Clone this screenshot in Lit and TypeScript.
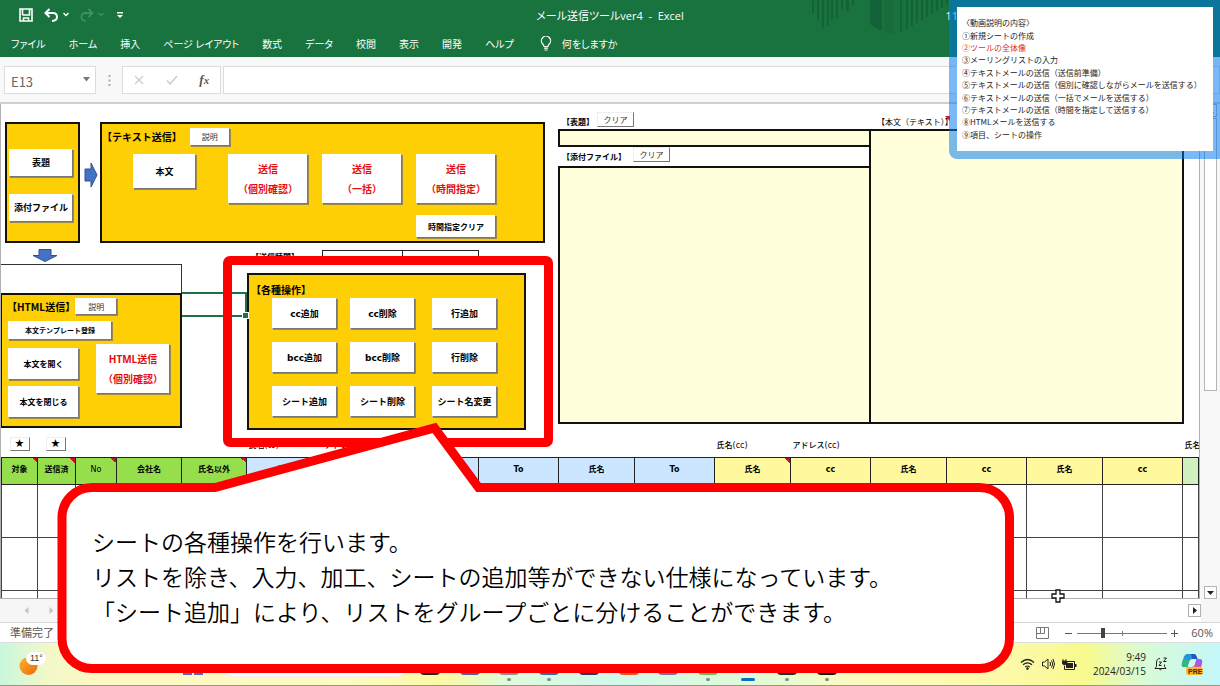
import { LitElement, html, css, svg } from "lit";
import { customElement } from "lit/decorators.js";
import { classMap } from "lit/directives/class-map.js";

interface Column {
  label: string;
  tone: string;
  note?: boolean;
  plain?: boolean;
}

const MENU = ["ファイル", "ホーム", "挿入", "ページ レイアウト", "数式", "データ", "校閲", "表示", "開発", "ヘルプ"];

const COLUMNS: Column[] = [
  { label: "対象", tone: "green", note: true },
  { label: "送信済", tone: "green", note: true },
  { label: "No", tone: "green", note: true, plain: true },
  { label: "会社名", tone: "green" },
  { label: "氏名以外", tone: "green", note: true },
  { label: "氏名", tone: "blue" },
  { label: "To", tone: "blue" },
  { label: "氏名", tone: "blue" },
  { label: "To", tone: "blue" },
  { label: "氏名", tone: "blue" },
  { label: "To", tone: "blue" },
  { label: "氏名", tone: "yellow", note: true },
  { label: "cc", tone: "yellow" },
  { label: "氏名", tone: "yellow" },
  { label: "cc", tone: "yellow" },
  { label: "氏名", tone: "yellow" },
  { label: "cc", tone: "yellow" },
  { label: "", tone: "mint" },
];

const OPERATIONS = ["cc追加", "cc削除", "行追加", "bcc追加", "bcc削除", "行削除", "シート追加", "シート削除", "シート名変更"];

const CONTENTS = [
  "〈動画説明の内容〉",
  "①新規シートの作成",
  "②ツールの全体像",
  "③メーリングリストの入力",
  "④テキストメールの送信（送信前準備）",
  "⑤テキストメールの送信（個別に確認しながらメールを送信する）",
  "⑥テキストメールの送信（一括でメールを送信する）",
  "⑦テキストメールの送信（時間を指定して送信する）",
  "⑧HTMLメールを送信する",
  "⑨項目、シートの操作",
];

const TASKS = [
  { color: "#222222", dot: "" },
  { color: "#5a5f9a", dot: "" },
  { color: "#8a8f98", dot: "on" },
  { color: "#2f6fb0", dot: "on" },
  { color: "#2a3a5c", dot: "" },
  { color: "#f4511e", dot: "" },
  { color: "#7b6fa8", dot: "" },
  { color: "#6cc04a", dot: "on" },
  { color: "#ffffff", dot: "active" },
  { color: "#1d2b3f", dot: "on" },
  { color: "#111111", dot: "on" },
];

@customElement("excel-header")
export class ExcelHeader extends LitElement {
  static styles = css`
    :host { display: block; background: #18733f; color: #fff; position: relative; overflow: hidden; }
    .art { position: absolute; right: 270px; top: 0; }
    .title { display: grid; grid-template-columns: 1fr auto 1fr; align-items: center; height: 30px; font-size: 11px; position: relative; }
    .quick { display: flex; align-items: center; padding-left: 19px; gap: 11px; }
    .quick button { background: none; border: 0; padding: 0; display: flex; color: #fff; }
    .user { justify-self: end; margin-right: 262px; }
    .name { white-space: pre; }
    nav { display: flex; align-items: center; gap: 23px; height: 27px; padding-left: 11px; font-size: 10px; position: relative; }
    nav a { color: #fff; text-decoration: none; white-space: nowrap; line-height: 16px; }
    .ask { display: flex; align-items: center; gap: 10px; margin-left: 3px; }
  `;
  render() {
    const bars = [812, 817, 822, 827, 831, 836, 841];
    const ends = [14, 20, 28, 26, 20, 18, 10];
    const right = [900, 906, 911, 916, 921, 926, 931, 936, 941, 946];
    return html`
      <svg class="art" width="140" height="57" viewBox="810 0 140 57" aria-hidden="true">
        ${bars.map((x, i) => svg`<rect x=${x} y="0" width="2" height=${ends[i]} fill="#13623a" />`)}
        <path d="M846 0h3v11h-3zM852 0h2v6h-2zM870 0h12v31q-7-3-12-7z" fill="#13623a" />
        <path d="M884 0h10v33h-10z" fill="#176b3d" />
        ${right.map((x, i) => svg`<rect x=${x} y="0" width="2" height=${32 - i * 3} fill="#13623a" />`)}
      </svg>
      <div class="title">
        <div class="quick">
          <button aria-label="保存">
            <svg width="14" height="14" viewBox="0 0 14 14" fill="none" stroke="#fff" stroke-width="1.6">
              <path d="M1 1h12v12H1zM3.500 7h7V1M3.500 1v6M4.500 13v-3h5v3" />
            </svg>
          </button>
          <button aria-label="元に戻す">
            <svg width="25" height="14" viewBox="0 0 25 14" fill="none" stroke="#fff" stroke-width="2">
              <path d="M5.500 1L1.500 5l4 4M2 5h7.500q3.500 .5 3.500 4t-5 4" /><path d="M19.500 5l2.500 2.500 2.500-2.500" stroke-width="1.400" />
            </svg>
          </button>
          <button aria-label="やり直し" disabled>
            <svg width="25" height="14" viewBox="0 0 25 14" fill="none" stroke="#3f9163" stroke-width="1.800">
              <path d="M8.500 1l4 4-4 4M12 5H5Q1.500 5.500 1.500 9t4 4" /><path d="M18.500 5l2.500 2.500 2.500-2.500" stroke-width="1.300" />
            </svg>
          </button>
          <button aria-label="クイック アクセスのカスタマイズ">
            <svg width="8" height="8" viewBox="0 0 8 8"><path d="M1 1h6v1.400H1zM1 4h6L4 7z" fill="#fff" /></svg>
          </button>
        </div>
        <span class="name">メール送信ツールver4  -  Excel</span>
        <span class="user">11</span>
      </div>
      <nav>
        ${MENU.map((m) => html`<a href="#">${m}</a>`)}
        <a href="#" class="ask">
          <svg width="12" height="15" viewBox="0 0 12 15" fill="none" stroke="#fff" stroke-width="1.200">
            <path d="M4 10.500Q4 9 2.500 7.800A4.600 4.600 0 1 1 9.500 7.800Q8 9 8 10.500zM4 12.200h4M4.500 14h3" />
          </svg>何をしますか</a>
      </nav>
    `;
  }
}

@customElement("formula-bar")
export class FormulaBar extends LitElement {
  static styles = css`
    :host { display: flex; align-items: center; padding: 9px 0 8px 4px; background: #f8f8f8; border-bottom: 2px solid #cfcfcf; }
    .box { box-sizing: border-box; height: 28px; border: 1px solid #dcdcdc; background: #fff; display: flex; align-items: center; }
    .ref { position: relative; width: 92px; }
    select { appearance: none; border: 0; background: none; width: 100%; height: 26px; padding: 3px 6px 0; font: 13px "Noto Sans CJK JP", sans-serif; color: #666; }
    .ref svg { position: absolute; right: 5px; top: 10px; pointer-events: none; }
    .dots { width: 26px; display: flex; justify-content: center; }
    .tools { width: 99px; justify-content: space-around; }
    .tools button { border: 0; background: none; padding: 0; display: flex; }
    .tools .fx { font: italic bold 13px/16px "Liberation Serif", serif; color: #555; }
    input { flex: 1; min-width: 0; margin-left: 2px; outline: none; padding: 0 6px; }
  `;
  render() {
    return html`
      <div class="box ref">
        <select aria-label="名前ボックス"><option>E13</option></select>
        <svg width="7" height="5" viewBox="0 0 7 5"><path d="M0 0h7L3.500 4.500z" fill="#777" /></svg>
      </div>
      <div class="dots"><svg width="3" height="11" viewBox="0 0 3 11" fill="#aaa"><path d="M.5 0h2v2h-2zM.5 4.500h2v2h-2zM.5 9h2v2h-2z" /></svg></div>
      <div class="box tools">
        <button aria-label="キャンセル"><svg width="10" height="10" viewBox="0 0 10 10" stroke="#ccc" stroke-width="1.200"><path d="M1 1l8 8M9 1L1 9" /></svg></button>
        <button aria-label="入力"><svg width="12" height="10" viewBox="0 0 12 10" fill="none" stroke="#ccc" stroke-width="1.500"><path d="M1 5.500L4 9l7-8" /></svg></button>
        <button class="fx" aria-label="関数の挿入">f<small>x</small></button>
      </div>
      <input class="box" aria-label="数式バー" />
    `;
  }
}

@customElement("work-sheet")
export class WorkSheet extends LitElement {
  static styles = css`
    :host { display: flex; flex: 1; min-height: 0; background: #f8f8f8; color: #000; }
    * { box-sizing: border-box; }
    .cells { flex: 1; min-width: 0; overflow: hidden; background: #fff; border: 1px solid #b0b0b0; border-width: 0 1px 1px; }
    .canvas { display: flex; }
    .left { flex: none; width: 557px; padding-top: 18px; }
    .row { display: flex; }
    .panel { background: #ffcf05; border: 2px solid #151208; flex: none; }
    .panel h2 { margin: 0; font-family: "Noto Sans CJK JP", sans-serif; font-size: 10px; line-height: 16px; font-weight: 700; white-space: nowrap; }
    .btn { font-family: inherit; font-feature-settings: inherit; background: #fff; border: 1px solid #fff; border-right-color: #777; border-bottom-color: #777; box-shadow: 1px 1px 0 #9a8a50; padding: 0; color: #000; font-size: 9px; font-weight: 700; line-height: 20px; white-space: nowrap; }
    .small { font-size: 8px; line-height: 12px; }
    .tiny { font-size: 7px; line-height: 12px; }
    .light { font-weight: 400; color: #333; font-size: 8px; line-height: 12px; }
    .red { color: #e60d10; font-size: 10px; }
    .flat { box-shadow: none; border-top-color: #eee; border-left-color: #eee; font-size: 8px; line-height: 10px; font-weight: 400; color: #333; }
    .subject { width: 75px; height: 121px; margin-left: 4px; padding: 25px 5px 0 2px; display: flex; flex-direction: column; gap: 17px; }
    .subject .btn { height: 28px; }
    .next { flex: none; margin: 40px 2px 0 4px; width: 14px; height: 26px; }
    .text { width: 445px; height: 121px; }
    .head { display: flex; align-items: center; }
    .text .head { padding: 4px 0 0; gap: 8px; }
    .text .light { width: 40px; height: 18px; }
    .send { display: grid; grid-template-columns: 81px 80px 80px 80px; column-gap: 14px; row-gap: 11px; padding: 8px 0 0 31px; }
    .send .red { height: 50px; }
    .send .body { width: 63px; height: 35px; }
    .send .clear { grid-column: 4; height: 23px; }
    .time { height: 21px; align-items: flex-end; padding: 0 0 0 31px; font-size: 8px; font-weight: 700; }
    .time svg { align-self: center; flex: none; margin-top: 4px; }
    .time .label { width: 71px; margin-left: 193px; line-height: 14px; }
    .time i { width: 81px; height: 14px; border: 1px solid #222; margin-right: -1px; }
    .time i + i { width: 77px; }
    .htmlcol { width: 181px; flex: none; }
    .blank { height: 29px; border: 1px solid #333; border-width: 1px 1px 0 0; }
    .htmlpanel { height: 135px; border-left-width: 1px; }
    .htmlpanel .head { padding: 3px 0 0 5px; }
    .htmlpanel .light { width: 42px; height: 17px; }
    .htmlgrid { display: grid; grid-template-columns: 71px 74px; column-gap: 17px; padding: 6px 0 0 6px; align-items: start; }
    .htmlgrid .tiny { width: 104px; height: 19px; grid-column: 1 / 3; }
    .stack { display: grid; gap: 6px; padding-top: 8px; }
    .stack .btn { height: 32px; font-size: 8px; }
    .htmlgrid .red { height: 50px; margin-top: 4px; }
    .selected { position: relative; width: 65px; height: 25px; margin-top: 28px; border: 2px solid #1e7145; border-width: 2px 2px 2px 0; flex: none; }
    .handle { position: absolute; right: -3px; bottom: -3px; width: 5px; height: 5px; background: #1e7145; outline: 1px solid #fff; }
    .ops { width: 279px; height: 157px; margin-top: 9px; padding: 7px 0 0 2px; }
    .opgrid { display: grid; grid-template-columns: 65px 69px 65px; column-gap: 13px; row-gap: 13px; padding-left: 21px; font-family: "DejaVu Sans", "Noto Sans CJK JP", sans-serif; }
    .opgrid .btn { width: 65px; height: 31px; }
    .fields { flex: none; width: 627px; display: grid; grid-template-columns: 313px 313px; grid-template-rows: 25px 18px 19px 258px; font-size: 8px; font-weight: 700; }
    .caption { display: flex; align-items: center; gap: 3px; padding: 10px 0 0 4px; line-height: 14px; }
    .caption .btn { width: 37px; height: 15px; margin-top: -4px; }
    .caption.second { padding-top: 0; gap: 7px; }
    .caption.plain { font-weight: 400; padding-left: 6px; gap: 0; }
    .corner { align-self: flex-start; margin: 2px 0 0 -8px; }
    .field { background: #ffffdc; border: 2px solid #111; }
    .tall { grid-column: 2; grid-row: 2 / 5; margin-left: -2px; }
    table { table-layout: fixed; border-collapse: collapse; width: 100%; font-family: "DejaVu Sans", "Noto Sans CJK JP", sans-serif; }
    .labels td { height: 27px; padding: 6px 0 0 2px; font-size: 8px; font-weight: 500; line-height: 12px; white-space: nowrap; border: 0; }
    .labels .mark { padding: 2px 0 0 8px; }
    .mark .btn { width: 20px; height: 14px; color: #000; font-size: 11px; line-height: 12px; }
    th { height: 27px; padding: 0 0 1px; font-size: 8px; line-height: 12px; font-weight: 700; border: 1px solid #222; }
    .lists td { height: 53px; border: 1px solid #444; }
    th.green { background-color: #97de4d; }
    th.blue { background-color: #cce6ff; }
    th.yellow { background-color: #fff89c; }
    th.mint { background-color: #d0f0c0; }
    th.plain { font-weight: 400; }
    th.note { background-image: linear-gradient(to bottom left, #c8102e 50%, transparent 50%); background-size: 5px 5px; background-position: top right; background-repeat: no-repeat; }
    .c36 { width: 36px; } .c38 { width: 38px; } .c41 { width: 41px; } .c65 { width: 65px; } .c76 { width: 76px; } .c80 { width: 80px; }
    .scroll { width: 20px; display: flex; flex-direction: column; align-items: center; gap: 1px; }
    .scroll button { width: 13px; height: 13px; padding: 0; background: #fff; border: 1px solid #b5b5b5; display: flex; align-items: center; justify-content: center; }
    .thumb { width: 13px; height: 273px; background: #fff; border: 1px solid #b5b5b5; }
    .track { flex: 1; }
  `;
  render() {
    const widths = ["c36", "c38", "c41", "c65", "c65", "c76", "c80", "c76", "c80", "c76", "c80", "c76", "c80", "c76", "c80", "c76", "c80", ""];
    return html`
      <div class="cells">
        <div class="canvas">
          <div class="left">
            <div class="row">
              <section class="panel subject">
                <button class="btn">表題</button>
                <button class="btn">添付ファイル</button>
              </section>
              <svg class="next" viewBox="0 0 14 26"><path d="M1 7h6V1l6 12-6 12v-6H1z" fill="#4472c4" stroke="#2f528f" /></svg>
              <section class="panel text">
                <div class="head"><h2>【テキスト送信】</h2><button class="btn light">説明</button></div>
                <div class="send">
                  <button class="btn body">本文</button>
                  <button class="btn red">送信<br />（個別確認）</button>
                  <button class="btn red">送信<br />（一括）</button>
                  <button class="btn red">送信<br />（時間指定）</button>
                  <button class="btn small clear">時間指定クリア</button>
                </div>
              </section>
            </div>
            <div class="row time">
              <svg width="26" height="13" viewBox="0 0 26 13"><path d="M7 .5h12v6h6L13 12.500 1 6.500h6z" fill="#4472c4" stroke="#2f528f" /></svg>
              <span class="label">【送信時間】</span><i></i><i></i>
            </div>
            <div class="row">
              <div class="htmlcol">
                <div class="blank"></div>
                <section class="panel htmlpanel">
                  <div class="head"><h2>【HTML送信】</h2><button class="btn light">説明</button></div>
                  <div class="htmlgrid">
                    <button class="btn tiny">本文テンプレート登録</button>
                    <div class="stack">
                      <button class="btn">本文を開く</button>
                      <button class="btn">本文を閉じる</button>
                    </div>
                    <button class="btn red">HTML送信<br />（個別確認）</button>
                  </div>
                </section>
              </div>
              <div class="selected"><span class="handle"></span></div>
              <section class="panel ops">
                <h2>【各種操作】</h2>
                <div class="opgrid">${OPERATIONS.map((o) => html`<button class="btn">${o}</button>`)}</div>
              </section>
            </div>
          </div>
          <div class="fields">
            <div class="caption"><span>【表題】</span><button class="btn flat">クリア</button></div>
            <div class="caption plain"><span>【本文（テキスト）】</span>
              <svg class="corner" width="5" height="5" viewBox="0 0 5 5"><path d="M0 0h5v5z" fill="#c8102e" /></svg></div>
            <div class="field"></div>
            <div class="caption second"><span>【添付ファイル】</span><button class="btn flat">クリア</button></div>
            <div class="field"></div>
            <div class="field tall"></div>
          </div>
        </div>
        <table>
          <colgroup>${widths.map((w) => html`<col class=${w} />`)}</colgroup>
          <thead>
            <tr class="labels">
              <td class="mark"><button class="btn flat">★</button></td>
              <td class="mark"><button class="btn flat">★</button></td>
              <td colspan="3"></td>
              <td>氏名(to)</td><td colspan="5">アドレス(to)</td>
              <td>氏名(cc)</td><td colspan="5">アドレス(cc)</td>
              <td>氏名</td>
            </tr>
            <tr>${COLUMNS.map((c) => html`<th class=${classMap({ [c.tone]: true, note: !!c.note, plain: !!c.plain })}>${c.label}</th>`)}</tr>
          </thead>
          <tbody class="lists">
            ${Array.from({ length: 12 }, () => html`<tr>${COLUMNS.map(() => html`<td></td>`)}</tr>`)}
          </tbody>
        </table>
      </div>
      <div class="scroll">
        <button aria-label="上へ"><svg width="7" height="4" viewBox="0 0 7 4"><path d="M0 4h7L3.500 0z" fill="#444" /></svg></button>
        <div class="thumb"></div>
        <div class="track"></div>
        <button aria-label="下へ"><svg width="7" height="4" viewBox="0 0 7 4"><path d="M0 0h7L3.500 4z" fill="#222" /></svg></button>
      </div>
    `;
  }
}

@customElement("sheet-footer")
export class SheetFooter extends LitElement {
  static styles = css`
    :host { display: block; color: #555; }
    * { box-sizing: border-box; }
    button { padding: 0; border: 0; background: none; display: flex; align-items: center; justify-content: center; }
    .tabs { height: 24px; background: #f6f6f6; border-bottom: 1px solid #d6d6d6; display: flex; align-items: center; padding-right: 19px; }
    .arrows { display: flex; gap: 20px; padding-left: 24px; }
    .bar { margin-left: auto; width: 400px; height: 23px; background: #fff; display: flex; align-items: center; justify-content: flex-end; }
    .bar button { width: 13px; height: 13px; border: 1px solid #b0b0b0; }
    .status { height: 20px; background: #fff; display: flex; align-items: center; padding: 0 7px 0 10px; font-size: 11px; line-height: 16px; border-bottom: 1px solid #ddd; }
    .zoom { margin-left: auto; display: flex; align-items: center; gap: 4px; }
    .zoom span { margin-left: 8px; }
    .layout { margin-right: 12px; }
    input { appearance: none; margin: 0; width: 90px; height: 12px; background: linear-gradient(#777, #777) 0 6px / 100% 1px no-repeat, linear-gradient(#777, #777) 45px 4px / 1px 5px no-repeat; }
    input::-webkit-slider-thumb { appearance: none; width: 4px; height: 10px; background: #444; }
  `;
  render() {
    return html`
      <div class="tabs">
        <div class="arrows">
          <button aria-label="前のシート"><svg width="5" height="7" viewBox="0 0 5 7"><path d="M4.500 0v7L.5 3.500z" fill="#c4c4c4" /></svg></button>
          <button aria-label="次のシート"><svg width="5" height="7" viewBox="0 0 5 7"><path d="M.5 0v7l4-3.500z" fill="#c4c4c4" /></svg></button>
        </div>
        <div class="bar"><button aria-label="右へ"><svg width="4" height="7" viewBox="0 0 4 7"><path d="M0 0v7l4-3.500z" fill="#222" /></svg></button></div>
      </div>
      <div class="status">
        <span>準備完了</span>
        <div class="zoom">
          <button class="layout" aria-label="改ページ プレビュー"><svg width="13" height="12" viewBox="0 0 13 12" fill="none" stroke="#777"><path d="M.5.5h12v11H.5zM4.500.5v6h-4M8.500.5v6h-4" /></svg></button>
          <button aria-label="縮小"><svg width="8" height="8" viewBox="0 0 8 8" stroke="#555"><path d="M0 4.500h7" /></svg></button>
          <input type="range" min="0" max="100" value="28" aria-label="ズーム" />
          <button aria-label="拡大"><svg width="8" height="8" viewBox="0 0 8 8" stroke="#555"><path d="M0 4.500h7M3.500 1v7" /></svg></button>
          <span>60%</span>
        </div>
      </div>
    `;
  }
}

@customElement("task-bar")
export class TaskBar extends LitElement {
  static styles = css`
    :host { box-sizing: border-box; height: 43px; display: flex; align-items: center; color: #222; border-bottom: 1px solid #8f9a80;
      background: linear-gradient(90deg, #c9f7dd 0%, #f3f8c8 4%, #fdf8c4 8%, #fbfbc6 28%, #fcf9a4 36%, #ddfbdc 42%, #d2f8ea 50%, #dffbd8 62%, #fcfbc0 70%, #fcf9a6 84%, #f8fa8e 89%, #d8fbd8 94%, #c4f7fa 100%); }
    * { box-sizing: border-box; }
    button { padding: 0; border: 0; background: none; display: flex; }
    .weather { margin-left: 19px; width: 28px; }
    .start { margin-left: 136px; }
    .search { margin: 0 0 0 17px; width: 190px; height: 26px; border-radius: 13px; background: #fff; border: 1px solid #eee; display: flex; justify-content: flex-end; overflow: hidden; }
    .tasks { display: flex; width: 437px; height: 42px; }
    .task { flex: 1; flex-direction: column; align-items: center; padding-top: 9px; gap: 3px; }
    .icon { width: 20px; height: 23px; }
    .dot { width: 4px; height: 3px; border-radius: 2px; }
    .on { background: #7d9186; }
    .active { width: 14px; background: #0f6cbd; }
    .tray { margin-left: auto; display: flex; align-items: center; }
    .clock { margin: 0 8px 0 16px; font-size: 10px; line-height: 14px; text-align: right; }
    .tray button + button { margin-left: 7px; }
    .tray .copilot { margin: 0 17px 0 14px; }
  `;
  render() {
    return html`
      <button class="weather" aria-label="天気">
        <svg width="28" height="24" viewBox="0 0 28 24">
          <defs><linearGradient id="sun" x1="0" y1="0" x2="1" y2="1"><stop offset="0" stop-color="#ffb52e" /><stop offset="1" stop-color="#e8690b" /></linearGradient></defs>
          <circle cx="9.500" cy="14" r="9" fill="url(#sun)" /><rect x="7" y="0" width="20" height="13" rx="6.500" fill="#fff" />
          <text x="11" y="9" font-size="9" fill="#333">11°</text>
        </svg>
      </button>
      <button class="start" aria-label="スタート"><svg width="20" height="22" viewBox="0 0 20 22" fill="#4a6fc0"><path d="M0 0h9v10H0zM11 0h9v10h-9zM0 12h9v10H0zM11 12h9v10h-9z" /></svg></button>
      <div class="search"><svg width="42" height="24" viewBox="0 0 42 24"><path d="M0 0h34v20q-17 2-34 0z" fill="#8a9a50" /></svg></div>
      <div class="tasks">
        ${TASKS.map((t) => html`<button class="task" aria-label="アプリ">
          <svg class="icon" viewBox="0 0 20 23"><rect width="20" height="23" rx="4" fill=${t.color} /></svg>
          <span class="dot ${t.dot}"></span></button>`)}
      </div>
      <div class="tray">
        <button aria-label="Wi-Fi"><svg width="15" height="12" viewBox="0 0 15 12" fill="none" stroke="#222" stroke-width="1.200"><path d="M1 4.500Q7.500-1.500 14 4.500M3 6.800q4.500-4 9 0M5.200 9q2.300-2 4.600 0" /><circle cx="7.500" cy="10.600" r=".7" fill="#222" /></svg></button>
        <button aria-label="音量"><svg width="13" height="12" viewBox="0 0 13 12" fill="none" stroke="#222"><path d="M.5 4h2L6 1v10L2.500 8h-2zM8 4q1.300 2 0 4M9.500 2.500q2.500 3.500 0 7M11 1q3 5 0 10" /></svg></button>
        <button aria-label="バッテリー"><svg width="15" height="13" viewBox="0 0 15 13"><path d="M5 3.500h7.500v8H2.500V8" fill="none" stroke="#222" /><path d="M4 5h7v5H4zM13 6h1.500v3H13z" fill="#222" /><path d="M1 1v3M4 1v3M0 3h5v2q-1 2-2.500 2T0 5z" fill="#222" stroke="#222" stroke-width=".8" /></svg></button>
        <div class="clock">9:49<br />2024/03/15</div>
        <button aria-label="通知"><svg width="13" height="14" viewBox="0 0 13 14" fill="none" stroke="#222"><path d="M6 1.500Q2.500 1.500 2.500 6v3.500L1 11.500h11L10.500 9.500V7.500M5 11.500q1.500 2.500 3 0M9.500 1h3L9.500 4.500h3M5 5h2.500L5 8.500h2.500" /></svg></button>
        <button class="copilot" aria-label="Copilot">
          <svg width="22" height="22" viewBox="0 0 22 22">
            <path d="M6 1h7q2 0 2.800 3l.7 2h-5Q9 6 8 9l-1.500 5H3Q0 14 1 10L3 3.500Q4 1 6 1z" fill="#2196d8" />
            <path d="M1 10l1-3.500h6L6.500 14H3Q0 14 1 10z" fill="#35b779" />
            <path d="M10 1h3q2 0 2.800 3l.7 2h-5z" fill="#2c4fc0" />
            <path d="M16 19H9q-2 0-2.800-3L5.500 14h5q2.500 0 3.500-3l1.500-5H18q4 0 3 4l-1.500 6Q18.500 19 16 19z" fill="#e0609a" />
            <path d="M15.500 6H18q4 0 3 4l-.8 3h-6.500z" fill="#a85be8" />
            <rect x="5" y="14" width="17" height="8" rx="3" fill="#ffb62e" />
            <text x="7" y="20.500" font-size="7" font-weight="700" fill="#3a2a00">PRE</text>
          </svg>
        </button>
      </div>
    `;
  }
}

@customElement("app-root")
export class AppRoot extends LitElement {
  static styles = css`
    :host { display: flex; flex-direction: column; height: 100vh; position: relative; overflow: hidden; font-family: "Open Sans", "Noto Sans CJK JP", sans-serif; background: #fff; }
    excel-header { font-feature-settings: "palt"; }
    .frame { position: absolute; left: 223px; top: 256px; width: 330px; height: 191px; box-sizing: border-box; border: 9px solid #fe0000; border-radius: 7px; pointer-events: none; }
    .callout { position: absolute; left: 57px; top: 420px; width: 958px; height: 254px; }
    .callout svg { position: absolute; left: 0; top: 0; }
    .words { position: relative; padding: 104px 0 0 35px; font-family: "Noto Sans CJK JP", sans-serif; }
    .words p { margin: 0; font-size: 23px; line-height: 35px; font-weight: 350; color: #000; white-space: nowrap; }
    .index { position: absolute; right: 0; top: 0; box-sizing: border-box; width: 271px; height: 159px; padding: 7px 7px 8px 8px; background: rgba(0, 120, 240, 0.52); border-radius: 0 0 0 8px; }
    .index ul { box-sizing: border-box; height: 144px; margin: 0; padding: 10px 0 10px 5px; background: #fff; list-style: none; display: flex; flex-direction: column; font: 8px "Noto Sans CJK JP", sans-serif; color: #222; }
    .index li { flex: 1; display: flex; align-items: center; line-height: 12px; white-space: nowrap; }
    .index .current { color: #e0302c; }
    .cursor { position: absolute; left: 1051px; top: 589px; }
  `;
  render() {
    return html`
      <excel-header></excel-header>
      <formula-bar></formula-bar>
      <work-sheet></work-sheet>
      <sheet-footer></sheet-footer>
      <task-bar></task-bar>
      <div class="frame"></div>
      <div class="callout">
        <svg width="958" height="254" viewBox="57 420 958 254" aria-hidden="true">
          <path d="M92 487.500H215L434.500 428 478.500 487.500H979.500a30 30 0 0 1 30 30V638.500a30 30 0 0 1-30 30H92a30 30 0 0 1-30-30V517.500a30 30 0 0 1 30-30z" fill="#fff" stroke="#fe0000" stroke-width="9" stroke-linejoin="miter" />
        </svg>
        <div class="words">
          <p>シートの各種操作を行います。</p>
          <p>リストを除き、入力、加工、シートの追加等ができない仕様になっています。</p>
          <p>「シート追加」により、リストをグループごとに分けることができます。</p>
        </div>
      </div>
      <aside class="index">
        <ul>${CONTENTS.map((c, i) => html`<li class=${classMap({ current: i === 2 })}>${c}</li>`)}</ul>
      </aside>
      <svg class="cursor" width="14" height="14" viewBox="0 0 14 14"><path d="M5 1h4v4h4v4H9v4H5V9H1V5h4z" fill="#fff" stroke="#111" stroke-width="1.300" /></svg>
    `;
  }
}
